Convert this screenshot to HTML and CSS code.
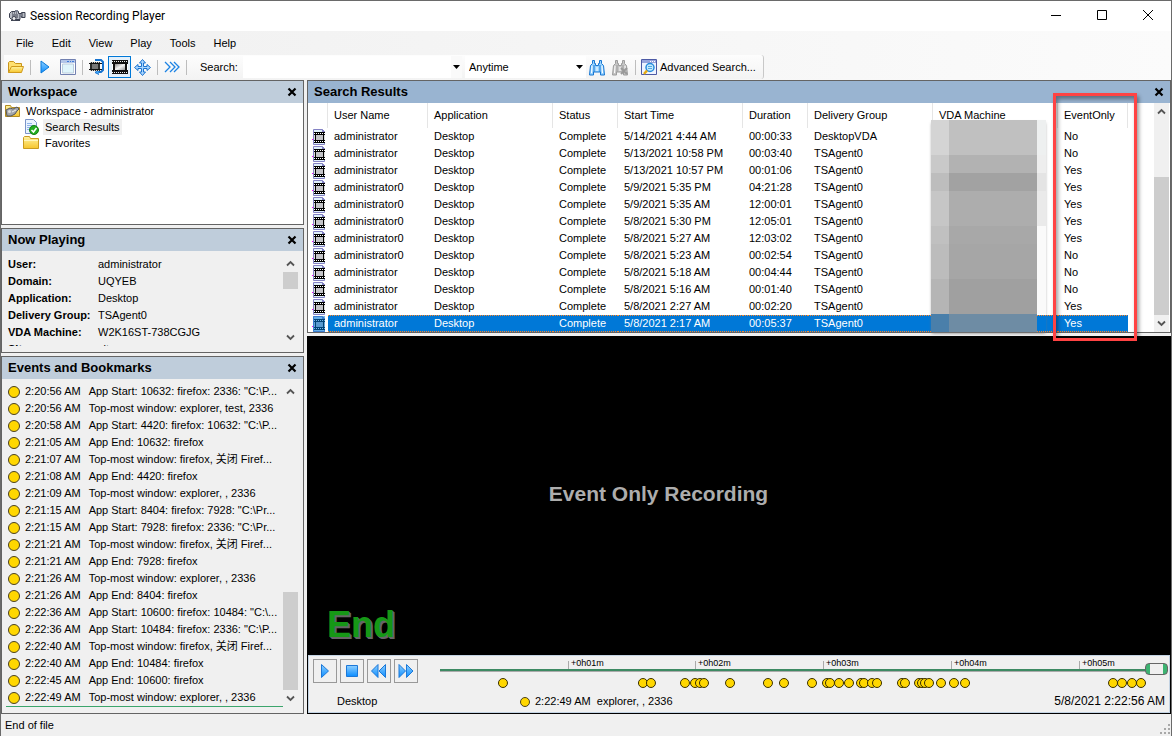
FILE: index.html
```
<!DOCTYPE html>
<html lang="en">
<head>
<meta charset="utf-8">
<title>Session Recording Player</title>
<link rel="stylesheet" href="styles.css">
</head>
<body>
<svg class="defs" aria-hidden="true">
  <defs>
    <linearGradient id="blue" x1="0" y1="0" x2="0" y2="1"><stop offset="0" stop-color="#8fd0ff"/><stop offset="1" stop-color="#0a8cff"/></linearGradient>
    <linearGradient id="gold" x1="0" y1="0" x2="0" y2="1"><stop offset="0" stop-color="#fff3a0"/><stop offset="1" stop-color="#f6c52c"/></linearGradient>
    <linearGradient id="metal" x1="0" y1="0" x2="1" y2="1"><stop offset="0" stop-color="#8a8a8a"/><stop offset=".5" stop-color="#f4f4f4"/><stop offset="1" stop-color="#9a9a9a"/></linearGradient>
  </defs>
  <symbol id="film" viewBox="0 0 14 16">
    <path d="M1.500 .5h9l2 2v13h-11z" fill="#dff0fb" stroke="#8482c4"/>
    <path d="M10 0v3h3z" fill="#8482c4"/>
    <path d="M2 3h11v11H2z" fill="#000"/>
    <path d="M4 6h7v5H4z" fill="#c4c4c8"/>
    <path d="M2 4.500h11M2 12.500h11" stroke="#fff" stroke-dasharray="1 1"/>
    <path d="M2 6h1v5H2zM12 6h1v5h-1z" fill="#ddd"/>
    <path d="M0 10h1v1H0z" fill="#f0f"/>
  </symbol>
  <symbol id="close" viewBox="0 0 10 10"><path d="M1.500 1.500l7 7M8.500 1.500l-7 7" stroke="#000" stroke-width="2.200"/></symbol>
  <symbol id="up" viewBox="0 0 9 9"><path d="M1 6.500L4.500 3 8 6.500" fill="none" stroke="#555" stroke-width="1.800"/></symbol>
  <symbol id="down" viewBox="0 0 9 9"><path d="M1 2.500L4.500 6 8 2.500" fill="none" stroke="#555" stroke-width="1.800"/></symbol>
  <symbol id="bino" viewBox="0 0 16 17">
    <path d="M3.500 1.500h2v3h1v2h3v-2h1v-3h2v3l2 2 1 9.500h-4v-3h-7v3h-4l1-9.500 2-2z"/>
    <path d="M5 6v7M11 6v7" fill="none"/>
    <path d="M3 7l-.5 7M13 7l.5 7M8 8v4" fill="none" stroke="#fff"/>
  </symbol>
</svg>

<div class="window">
  <header class="titlebar">
    <svg class="app-icon" width="17" height="12" viewBox="0 0 17 12"><path d="M2.500 1.500h7v2h3v-1h3.500v5h-3.500v-1H11v3H2.500l-2-2v-4z" fill="#b8bcc4" stroke="#3c4150"/><path d="M3 3h1M5 3h1M7 3h1M3 5h6M3 7h6M13 3v4M2 10.500h9" stroke="#3c4150"/><circle cx="5" cy="8.500" r="2" fill="#eee" stroke="#3c4150"/><path d="M6 1h3M11 4v3" stroke="#7c8190" stroke-width="2"/></svg>
    <h1>Session Recording Player</h1>
    <div class="caption-buttons">
      <button type="button" aria-label="Minimize"><svg width="12" height="12"><path d="M1 5.500h10" stroke="#000"/></svg></button>
      <button type="button" aria-label="Maximize"><svg width="12" height="12"><path d="M1.500 .5h9v9h-9z" fill="none" stroke="#000"/></svg></button>
      <button type="button" aria-label="Close"><svg width="12" height="12"><path d="M1 0l10 10M11 0L1 10" stroke="#000"/></svg></button>
    </div>
  </header>

  <nav class="menubar">
    <button type="button">File</button><button type="button">Edit</button><button type="button">View</button><button type="button">Play</button><button type="button">Tools</button><button type="button">Help</button>
  </nav>

  <div class="toolbar-row">
    <div class="toolbar">
      <button class="tool" type="button" aria-label="Open"><svg width="16" height="14"><path d="M.5 12.500v-10l1-1h4l2 2h6v3" fill="#ffe070" stroke="#c8941c"/><path d="M.5 12.500l3-6h12l-2 6z" fill="url(#gold)" stroke="#d09a1c"/></svg></button>
      <span class="sep"></span>
      <button class="tool" type="button" aria-label="Play"><svg width="10" height="14"><path d="M1 1v12l8-6z" fill="url(#blue)" stroke="#0878d8"/></svg></button>
      <button class="tool" type="button" aria-label="Window"><svg width="16" height="16"><path d="M.5.5h15v15H.5z" fill="#fff" stroke="#7180b0"/><path d="M1 1h14v3H1z" fill="#b3c6e8"/><path d="M7 2.500h2M10 2.500h1M12 2.500h2" stroke="#3d7ad8"/><path d="M2.500 5h11v9h-11z" fill="#dff5fb" stroke="#bcd"/></svg></button>
      <span class="sep"></span>
      <button class="tool" type="button" aria-label="Zoom to fit"><svg width="16" height="16"><path d="M6 1h6l2 2v8l-2 2H8" fill="none" stroke="#1673cf" stroke-width="2"/><path d="M9 11l-3 2.500 4 2" fill="#45a5f5" stroke="#1673cf"/><path d="M1 3h10v9H1z" fill="#2a2a2a"/><path d="M3 5h6v5H3z" fill="#777"/><path d="M1 3.500h10M1 11.500h10" stroke="#ccc" stroke-dasharray="1 1"/><path d="M0 4.500h13M0 10.500h13" stroke="#111"/></svg></button>
      <button class="tool pressed" type="button" aria-label="Actual size" aria-pressed="true"><svg width="16" height="14"><path d="M0 0h16v14H0z" fill="#111"/><path d="M3 4h10v6H3z" fill="url(#metal)"/><path d="M0 1.500h16M0 12.500h16" stroke="#eee" stroke-dasharray="1 1"/><path d="M0 4h1v6H0zM15 4h1v6h-1z" fill="#fff"/></svg></button>
      <button class="tool" type="button" aria-label="Pan"><svg width="17" height="17"><path d="M8.500.5l3 3.500h-2v3.500H13v-2l3.500 3-3.500 3v-2H9.500V13h2l-3 3.500-3-3.500h2V9.500H4v2L.5 8.500 4 5.500v2h3.500V4h-2z" fill="#a9d6ff" stroke="#1b73cf"/></svg></button>
      <span class="sep"></span>
      <button class="tool" type="button" aria-label="Fast review"><svg width="16" height="12"><path d="M1 1l5 5-5 5M6 1l5 5-5 5M10 1l5 5-5 5" fill="none" stroke="#1c83e4" stroke-width="1.300"/></svg></button>
      <span class="sep"></span>
      <label class="search-label" for="query">Search:</label>
      <div class="combo query"><input id="query" type="text"><button type="button" aria-label="Recent searches"><svg width="7" height="4"><path d="M0 0h7L3.500 4z"/></svg></button></div>
      <div class="combo when"><select aria-label="Time range"><option>Anytime</option></select><svg width="7" height="4"><path d="M0 0h7L3.500 4z"/></svg></div>
      <button class="tool" type="button" aria-label="Find"><svg width="16" height="17" fill="#9ad4ff" stroke="#1776d2"><use href="#bino"/></svg></button>
      <button class="tool" type="button" aria-label="Clear search"><svg width="17" height="17"><g fill="#c6c6c6" stroke="#9c9c9c"><use href="#bino" width="16" height="17"/></g><path d="M9 9l6 6M15 9l-6 6" stroke="#999" stroke-width="2"/></svg></button>
      <span class="sep"></span>
      <button class="advanced" type="button"><svg width="16" height="16"><path d="M.5.5h15v15H.5z" fill="#eef4ff" stroke="#4d5aa5"/><path d="M1 1h14v3H1z" fill="#98a5dc"/><path d="M9 2.500h5" stroke="#fff" stroke-dasharray="1 1"/><circle cx="9" cy="8.500" r="4" fill="#c5ecff" stroke="#278bdc" stroke-width="1.500"/><path d="M7 7.500h4M7 9.500h4" stroke="#56aae0"/><path d="M6 11.500L3 15" stroke="#e5aa10" stroke-width="2.500"/></svg>Advanced Search...</button>
    </div>
  </div>

  <main class="workarea">
    <div class="left">
      <section class="panel workspace">
        <header class="panel-head"><h2>Workspace</h2><button type="button" aria-label="Close Workspace"><svg width="10" height="10"><use href="#close"/></svg></button></header>
        <ul class="tree">
          <li><svg width="17" height="16"><path d="M1.500 13.500v-11h5l1 2h8v9z" fill="url(#gold)" stroke="#b38b20"/><path d="M2 7l4-2 3 1 4-2 2 2-2 2-2 3-4 2H3z" fill="#a3a6aa" stroke="#55585e"/><circle cx="5.500" cy="8.500" r="1.500" fill="#ddd"/><path d="M8 9l4-2" stroke="#eee"/></svg><span>Workspace - administrator</span></li>
          <li class="child"><svg width="17" height="16"><path d="M2.500.5h8l3 3v11h-11z" fill="#eaf3ff" stroke="#7b94c8"/><path d="M4 4.500h5M4 6.500h6M4 8.500h4M4 10.500h3" stroke="#8fb3e8"/><circle cx="11" cy="11" r="4.500" fill="#22ad22" stroke="#138013"/><path d="M8.500 11l2 2 3-4" fill="none" stroke="#fff" stroke-width="1.600"/></svg><span class="current">Search Results</span></li>
          <li class="child"><svg width="17" height="16"><path d="M.5 13.500v-11l1-1h5l1 2h8v10z" fill="url(#gold)" stroke="#c99b20"/><path d="M1 5.500h14" stroke="#fff6bd"/></svg><span>Favorites</span></li>
        </ul>
      </section>

      <section class="panel now">
        <header class="panel-head"><h2>Now Playing</h2><button type="button" aria-label="Close Now Playing"><svg width="10" height="10"><use href="#close"/></svg></button></header>
        <div class="scroller">
          <dl class="details">
            <dt>User:</dt><dd>administrator</dd>
            <dt>Domain:</dt><dd>UQYEB</dd>
            <dt>Application:</dt><dd>Desktop</dd>
            <dt>Delivery Group:</dt><dd>TSAgent0</dd>
            <dt>VDA Machine:</dt><dd>W2K16ST-738CGJG</dd>
            <dt>Site:</dt><dd>site</dd>
          </dl>
          <div class="bar"><svg width="9" height="9"><use href="#up"/></svg><span class="track"><span class="thumb now-thumb"></span></span><svg width="9" height="9"><use href="#down"/></svg></div>
        </div>
      </section>

      <section class="panel events">
        <header class="panel-head"><h2>Events and Bookmarks</h2><button type="button" aria-label="Close Events and Bookmarks"><svg width="10" height="10"><use href="#close"/></svg></button></header>
        <div class="scroller">
          <ol class="event-list">
            <li><i class="dot"></i><time>2:20:56 AM</time><span>App Start: 10632: firefox: 2336: "C:\P...</span></li>
            <li><i class="dot"></i><time>2:20:56 AM</time><span>Top-most window: explorer, test, 2336</span></li>
            <li><i class="dot"></i><time>2:20:58 AM</time><span>App Start: 4420: firefox: 10632: "C:\P...</span></li>
            <li><i class="dot"></i><time>2:21:05 AM</time><span>App End: 10632: firefox</span></li>
            <li><i class="dot"></i><time>2:21:07 AM</time><span>Top-most window: firefox, 关闭 Firef...</span></li>
            <li><i class="dot"></i><time>2:21:08 AM</time><span>App End: 4420: firefox</span></li>
            <li><i class="dot"></i><time>2:21:09 AM</time><span>Top-most window: explorer, , 2336</span></li>
            <li><i class="dot"></i><time>2:21:15 AM</time><span>App Start: 8404: firefox: 7928: "C:\Pr...</span></li>
            <li><i class="dot"></i><time>2:21:15 AM</time><span>App Start: 7928: firefox: 2336: "C:\Pr...</span></li>
            <li><i class="dot"></i><time>2:21:21 AM</time><span>Top-most window: firefox, 关闭 Firef...</span></li>
            <li><i class="dot"></i><time>2:21:21 AM</time><span>App End: 7928: firefox</span></li>
            <li><i class="dot"></i><time>2:21:26 AM</time><span>Top-most window: explorer, , 2336</span></li>
            <li><i class="dot"></i><time>2:21:26 AM</time><span>App End: 8404: firefox</span></li>
            <li><i class="dot"></i><time>2:22:36 AM</time><span>App Start: 10600: firefox: 10484: "C:\...</span></li>
            <li><i class="dot"></i><time>2:22:36 AM</time><span>App Start: 10484: firefox: 2336: "C:\P...</span></li>
            <li><i class="dot"></i><time>2:22:40 AM</time><span>Top-most window: firefox, 关闭 Firef...</span></li>
            <li><i class="dot"></i><time>2:22:40 AM</time><span>App End: 10484: firefox</span></li>
            <li><i class="dot"></i><time>2:22:45 AM</time><span>App End: 10600: firefox</span></li>
            <li><i class="dot"></i><time>2:22:49 AM</time><span>Top-most window: explorer, , 2336</span></li>
          </ol>
          <div class="bar"><svg width="9" height="9"><use href="#up"/></svg><span class="track at-end"><span class="thumb events-thumb"></span></span><svg width="9" height="9"><use href="#down"/></svg></div>
        </div>
      </section>
    </div>

    <div class="right">
      <section class="panel results">
        <header class="panel-head active"><h2>Search Results</h2><button type="button" aria-label="Close Search Results"><svg width="10" height="10"><use href="#close"/></svg></button></header>
        <div class="results-body">
          <div class="table-wrap">
            <table>
              <colgroup><col class="c20"><col class="c100"><col class="c125"><col class="c65"><col class="c125"><col class="c65"><col class="c125"><col class="c125"><col class="c70"></colgroup>
              <thead><tr><th></th><th>User Name</th><th>Application</th><th>Status</th><th>Start Time</th><th>Duration</th><th>Delivery Group</th><th>VDA Machine</th><th>EventOnly</th></tr></thead>
              <tbody>
                <tr><td><svg width="14" height="16"><use href="#film"/></svg></td><td>administrator</td><td>Desktop</td><td>Complete</td><td>5/14/2021 4:44 AM</td><td>00:00:33</td><td>DesktopVDA</td><td></td><td>No</td></tr>
                <tr><td><svg width="14" height="16"><use href="#film"/></svg></td><td>administrator</td><td>Desktop</td><td>Complete</td><td>5/13/2021 10:58 PM</td><td>00:03:40</td><td>TSAgent0</td><td></td><td>No</td></tr>
                <tr><td><svg width="14" height="16"><use href="#film"/></svg></td><td>administrator</td><td>Desktop</td><td>Complete</td><td>5/13/2021 10:57 PM</td><td>00:01:06</td><td>TSAgent0</td><td></td><td>Yes</td></tr>
                <tr><td><svg width="14" height="16"><use href="#film"/></svg></td><td>administrator0</td><td>Desktop</td><td>Complete</td><td>5/9/2021 5:35 PM</td><td>04:21:28</td><td>TSAgent0</td><td></td><td>Yes</td></tr>
                <tr><td><svg width="14" height="16"><use href="#film"/></svg></td><td>administrator0</td><td>Desktop</td><td>Complete</td><td>5/9/2021 5:35 AM</td><td>12:00:01</td><td>TSAgent0</td><td></td><td>Yes</td></tr>
                <tr><td><svg width="14" height="16"><use href="#film"/></svg></td><td>administrator0</td><td>Desktop</td><td>Complete</td><td>5/8/2021 5:30 PM</td><td>12:05:01</td><td>TSAgent0</td><td></td><td>Yes</td></tr>
                <tr><td><svg width="14" height="16"><use href="#film"/></svg></td><td>administrator0</td><td>Desktop</td><td>Complete</td><td>5/8/2021 5:27 AM</td><td>12:03:02</td><td>TSAgent0</td><td></td><td>Yes</td></tr>
                <tr><td><svg width="14" height="16"><use href="#film"/></svg></td><td>administrator0</td><td>Desktop</td><td>Complete</td><td>5/8/2021 5:23 AM</td><td>00:02:54</td><td>TSAgent0</td><td></td><td>No</td></tr>
                <tr><td><svg width="14" height="16"><use href="#film"/></svg></td><td>administrator</td><td>Desktop</td><td>Complete</td><td>5/8/2021 5:18 AM</td><td>00:04:44</td><td>TSAgent0</td><td></td><td>No</td></tr>
                <tr><td><svg width="14" height="16"><use href="#film"/></svg></td><td>administrator</td><td>Desktop</td><td>Complete</td><td>5/8/2021 5:16 AM</td><td>00:01:40</td><td>TSAgent0</td><td></td><td>No</td></tr>
                <tr><td><svg width="14" height="16"><use href="#film"/></svg></td><td>administrator</td><td>Desktop</td><td>Complete</td><td>5/8/2021 2:27 AM</td><td>00:02:20</td><td>TSAgent0</td><td></td><td>Yes</td></tr>
                <tr class="selected"><td><svg width="14" height="16"><use href="#film"/><path d="M1 0h12v16H1z" fill="#0078d7" opacity=".55"/></svg></td><td>administrator</td><td>Desktop</td><td>Complete</td><td>5/8/2021 2:17 AM</td><td>00:05:37</td><td>TSAgent0</td><td></td><td>Yes</td></tr>
              </tbody>
            </table>
            <svg class="mosaic" width="115" height="212" viewBox="0 0 115 212" shape-rendering="crispEdges" aria-hidden="true">
              <path fill="#d4d4d4" d="M0 0h18v35H0z"/><path fill="#c0c0c0" d="M18 0h88v35H18z"/><path fill="#eef0f0" d="M106 0h9v35h-9z"/>
              <path fill="#c9c9c9" d="M0 35h18v18H0z"/><path fill="#b2b2b2" d="M18 35h88v18H18z"/><path fill="#eee" d="M106 35h9v18h-9z"/>
              <path fill="#bdbdbd" d="M0 53h18v18H0z"/><path fill="#a2a2a2" d="M18 53h88v18H18z"/><path fill="#e4e4e4" d="M106 53h9v18h-9z"/>
              <path fill="#c6c6c6" d="M0 71h18v35H0z"/><path fill="#adadad" d="M18 71h88v35H18z"/><path fill="#eaeaea" d="M106 71h9v35h-9z"/>
              <path fill="#c0c0c0" d="M0 106h18v18H0z"/><path fill="#a8a8a8" d="M18 106h88v18H18z"/><path fill="#fafafa" d="M106 106h9v88h-9z"/>
              <path fill="#bcbcbc" d="M0 124h18v35H0z"/><path fill="#a6a6a6" d="M18 124h88v35H18z"/>
              <path fill="#b5b5b5" d="M0 159h18v35H0z"/><path fill="#a0a0a0" d="M18 159h88v35H18z"/>
              <path fill="#4a7faa" d="M0 194h18v18H0z"/><path fill="#6e8ca4" d="M18 194h88v18H18z"/>
            </svg>
          </div>
          <div class="bar"><svg width="9" height="9"><use href="#up"/></svg><span class="track at-end"><span class="thumb results-thumb"></span></span><svg width="9" height="9"><use href="#down"/></svg></div>
        </div>
      </section>

      <section class="player">
        <div class="screen">
          <p class="notice">Event Only Recording</p>
          <p class="end">End</p>
        </div>
        <div class="controls">
          <div class="transport">
            <button type="button" aria-label="Play"><svg width="10" height="16"><path d="M1.500 1.500v13l7-6.500z" fill="url(#blue)" stroke="#1c78d8"/></svg></button>
            <button type="button" aria-label="Stop"><svg width="14" height="14"><path d="M1.500 1.500h11v11h-11z" fill="url(#blue)" stroke="#1c78d8"/></svg></button>
            <button type="button" aria-label="Slower"><svg width="18" height="16"><path d="M8 1.500v13L1.500 8zM15.500 1.500v13L9 8z" fill="url(#blue)" stroke="#1c78d8"/></svg></button>
            <button type="button" aria-label="Faster"><svg width="18" height="16"><path d="M2 1.500v13L8.500 8zM9.500 1.500v13L16 8z" fill="url(#blue)" stroke="#1c78d8"/></svg></button>
          </div>
          <div class="timeline">
            <span class="tick" style="left:17.58%">+0h01m</span>
            <span class="tick" style="left:35.03%">+0h02m</span>
            <span class="tick" style="left:52.61%">+0h03m</span>
            <span class="tick" style="left:70.19%">+0h04m</span>
            <span class="tick" style="left:87.77%">+0h05m</span>
            <span class="handle"></span>
            <svg class="marks" width="100%" height="12" fill="#ffd700" stroke="#3a3000">
              <circle cx="8.65%" cy="6" r="4.500"/><circle cx="27.88%" cy="6" r="4.500"/><circle cx="28.98%" cy="6" r="4.500"/><circle cx="33.65%" cy="6" r="4.500"/><circle cx="35.03%" cy="6" r="4.500"/><circle cx="35.71%" cy="6" r="4.500"/><circle cx="36.26%" cy="6" r="4.500"/><circle cx="39.84%" cy="6" r="4.500"/><circle cx="45.05%" cy="6" r="4.500"/><circle cx="47.25%" cy="6" r="4.500"/><circle cx="51.10%" cy="6" r="4.500"/><circle cx="53.16%" cy="6" r="4.500"/><circle cx="53.57%" cy="6" r="4.500"/><circle cx="54.81%" cy="6" r="4.500"/><circle cx="56.18%" cy="6" r="4.500"/><circle cx="57.83%" cy="6" r="4.500"/><circle cx="58.24%" cy="6" r="4.500"/><circle cx="59.34%" cy="6" r="4.500"/><circle cx="60.03%" cy="6" r="4.500"/><circle cx="63.46%" cy="6" r="4.500"/><circle cx="63.87%" cy="6" r="4.500"/><circle cx="65.80%" cy="6" r="4.500"/><circle cx="66.21%" cy="6" r="4.500"/><circle cx="66.62%" cy="6" r="4.500"/><circle cx="67.17%" cy="6" r="4.500"/><circle cx="68.82%" cy="6" r="4.500"/><circle cx="70.60%" cy="6" r="4.500"/><circle cx="72.12%" cy="6" r="4.500"/><circle cx="92.45%" cy="6" r="4.500"/><circle cx="93.68%" cy="6" r="4.500"/><circle cx="95.05%" cy="6" r="4.500"/><circle cx="96.29%" cy="6" r="4.500"/>
            </svg>
          </div>
          <span class="source">Desktop</span>
          <div class="info">
            <span class="latest"><i class="dot small"></i>2:22:49 AM&nbsp; explorer, , 2336</span>
            <time class="clock">5/8/2021 2:22:56 AM</time>
          </div>
        </div>
      </section>
      <div class="callout"></div>
    </div>
  </main>

  <footer class="status"><span>End of file</span><svg width="10" height="10"><path d="M8 0h2v2H8zM8 4h2v2H8zM4 4h2v2H4zM8 8h2v2H8zM4 8h2v2H4zM0 8h2v2H0z" fill="#a8a8a8"/></svg></footer>
</div>
</body>
</html>
```

FILE: styles.css
```
* { box-sizing: border-box; }
body, h1, h2, p, ul, ol, dl, dd { margin: 0; padding: 0; }
ul, ol { list-style: none; }
body { background: #f0f0f0; color: #000; font: 11px/17px "Liberation Sans", "Noto Sans CJK SC", sans-serif; }
button, input, select { font: inherit; color: inherit; border: 0; padding: 0; margin: 0; background: none; }
svg { display: block; flex: none; }
.defs { position: absolute; width: 0; height: 0; }

.window { display: flex; flex-direction: column; min-height: 100vh; border: 1px solid #6a6a6a; }

.titlebar { display: flex; align-items: center; height: 30px; padding-left: 8px; background: #fff; }
.titlebar h1 { flex: 1; margin-left: 4px; font: 12px/18px Roboto, sans-serif; }
.caption-buttons { display: flex; }
.caption-buttons button { display: grid; place-items: center; width: 46px; height: 28px; }

.menubar { display: flex; gap: 18px; height: 24px; padding-left: 15px; background: linear-gradient(90deg, #f0f0f0, #fbfbfb); }
.toolbar-row { height: 25px; background: linear-gradient(90deg, #f0f0f0, #fbfbfb); }
.toolbar { display: flex; align-items: center; width: max-content; height: 24px; margin-left: 3px; background: linear-gradient(#fdfdfd, #f3f3f3); border-right: 1px solid #c8c8c8; border-radius: 0 3px 3px 0; }
.tool { display: grid; place-items: center; width: 23px; height: 22px; }
.pressed { border: 1px solid #0078d7; background: #e4f0fa; }
.sep { width: 1px; height: 15px; margin: 0 2px 0 3px; background: #bdbdbd; }
.search-label { margin: 0 5px 0 11px; }
.combo { position: relative; display: flex; align-items: center; height: 22px; background: #fff; }
.query { width: 219px; margin-right: 3px; }
.query input { flex: 1; min-width: 0; height: 22px; outline: 0; }
.query button { display: grid; place-items: center; width: 11px; height: 22px; background: #fafafa; }
.when { width: 121px; }
.when select { width: 121px; height: 22px; padding-left: 4px; appearance: none; }
.when svg { position: absolute; right: 3px; pointer-events: none; }
.advanced { display: flex; align-items: center; gap: 3px; padding: 0 7px 0 3px; }

.workarea { flex: 1; display: grid; grid-template-columns: 303px 1fr; gap: 3px; }
.left { display: grid; grid-template-rows: 145px 125px 1fr; gap: 3px; }
.right { position: relative; display: grid; grid-template-rows: 253px 1fr; gap: 3px; min-width: 0; }
.panel { display: flex; flex-direction: column; min-width: 0; min-height: 0; border: 1px solid #646464; }
.panel-head { display: flex; align-items: center; justify-content: space-between; height: 22px; padding: 0 6px; background: #bfcddb; }
.panel-head h2 { font-size: 13px; line-height: 22px; }
.active { background: #99b4d1; }
.workspace { background: #fff; }

.tree { line-height: 16px; }
.tree li { display: flex; gap: 3px; padding-left: 2px; }
.tree .child { padding-left: 21px; }
.tree span { padding: 0 2px; }
.current { background: #f0f0f0; }

.scroller { flex: 1; display: flex; min-height: 0; padding: 4px 5px 6px 4px; }
.details { flex: 1; display: grid; grid-template-columns: 90px 1fr; grid-auto-rows: 17px; overflow: hidden; padding: 1px 2px; white-space: nowrap; }
.details dt { font-weight: bold; }
.event-list { flex: 1; min-width: 0; border-bottom: 1px solid #3ca56c; }
.event-list li { display: flex; align-items: center; height: 17px; padding-left: 2px; white-space: nowrap; overflow: hidden; }
.event-list time { margin: 0 8px 0 5px; }
.dot { flex: none; width: 12px; height: 12px; border: 1px solid #4a4020; border-radius: 50%; background: #ffd700; }
.small { width: 10px; height: 10px; }

.bar { flex: none; display: flex; flex-direction: column; align-items: center; width: 15px; padding: 4px 0; background: #f0f0f0; }
.track { flex: 1; display: flex; flex-direction: column; width: 15px; padding: 4px 0; }
.at-end { justify-content: flex-end; }
.thumb { background: #cdcdcd; }
.now-thumb { height: 17px; }
.events-thumb { height: 98px; }
.results-thumb { height: 138px; }

.results { background: #fff; }
.results-body { flex: 1; display: flex; min-height: 0; padding-right: 1px; }
.table-wrap { position: relative; flex: 1; min-width: 0; }
table { width: 820px; table-layout: fixed; border-spacing: 0; white-space: nowrap; }
.c20 { width: 20px; }
.c65 { width: 65px; }
.c70 { width: 70px; }
.c100 { width: 100px; }
.c125 { width: 125px; }
th { height: 25px; padding: 0 6px; border-right: 1px solid #e5e5e5; font-weight: normal; text-align: left; }
td { height: 17px; padding: 0 6px; line-height: 17px; }
td:first-child { padding: 0 0 0 4px; }
.selected td:not(:first-child) {
  color: #fff;
  background:
    repeating-linear-gradient(90deg, #ff8728 0 1px, #0078d7 1px 2px) top / 100% 1px no-repeat,
    repeating-linear-gradient(90deg, #ff8728 0 1px, #0078d7 1px 2px) bottom / 100% 1px no-repeat,
    #0078d7;
}
.mosaic { position: absolute; left: 623px; top: 17px; box-shadow: 0 2px 3px -1px #777; }

.callout { position: absolute; top: 13px; left: 746px; width: 84px; height: 248px; border: 3px solid #ff4343; box-shadow: 2px 3px 4px #0006, inset 2px 3px 4px #0006; }

.player { display: flex; flex-direction: column; min-width: 0; border: 1px solid #000; background: #000; }
.screen { flex: 1; display: grid; grid-template-rows: 1fr auto 1fr; }
.notice { grid-row: 2; justify-self: center; padding: 0 161px 4px 0; color: #adadad; font: bold 21px/24px "Liberation Sans", sans-serif; }
.end { grid-row: 3; align-self: end; padding: 0 0 10px 19px; color: #169816; font: bold 36px/40px "Liberation Sans", sans-serif; text-shadow: 1px 1px #666, 2px 2px #666; }
.controls { display: grid; grid-template-columns: 127px 1fr; grid-template-rows: 37px 19px; padding: 0 1px 0 4px; border: 1px solid #c3d3e3; background: #f0f0f0; }
.transport { display: flex; gap: 3px; padding-top: 3px; }
.transport button { display: grid; place-items: center; width: 24px; height: 24px; border: 1px solid #999; }
.timeline { position: relative; }
.timeline::before { content: ""; position: absolute; left: 0; right: 20px; top: 13px; height: 2px; background: #3d8a63; border-bottom: 1px solid #aaa; }
.tick { position: absolute; top: 5px; height: 8px; padding-left: 2px; border-left: 1px solid #aaa; font-size: 9px; line-height: 5px; }
.handle { position: absolute; right: 0; top: 7px; width: 23px; height: 12px; border: 1px solid #666; border-radius: 4px; background: linear-gradient(90deg, #3cb371 4px, #f0f0f0 4px, #f0f0f0 17px, #3cb371 17px); }
.marks { position: absolute; left: 0; top: 21px; }
.source { padding-left: 24px; line-height: 17px; }
.info { display: flex; justify-content: space-between; padding-left: 80px; }
.latest { display: flex; align-items: center; gap: 5px; height: 17px; }
.clock { padding-right: 3px; font-size: 12px; line-height: 17px; }

.status { display: flex; align-items: flex-end; justify-content: space-between; height: 23px; padding: 0 1px 3px 4px; }
```
